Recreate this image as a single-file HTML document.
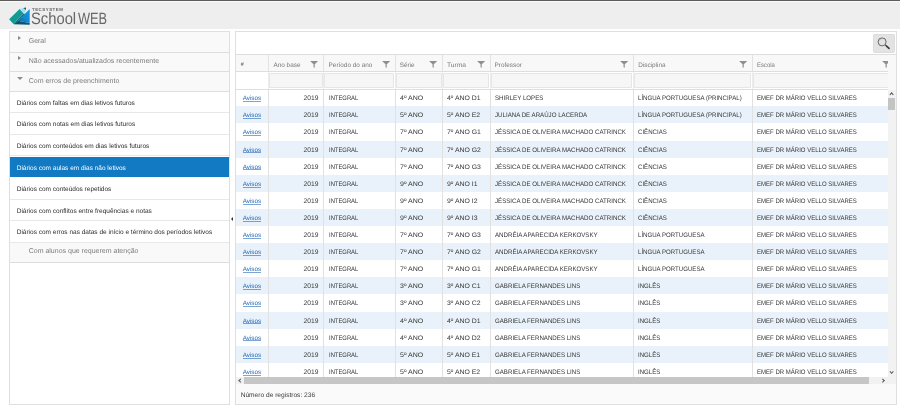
<!DOCTYPE html>
<html lang="pt-BR"><head><meta charset="utf-8"><title>SchoolWEB</title>
<style>
html,body{margin:0;padding:0;}
body{width:900px;height:407px;overflow:hidden;background:#fff;font-family:"Liberation Sans",sans-serif;position:relative;color:#444;text-rendering:geometricPrecision;}
.page{position:absolute;left:0;top:0;width:900px;height:407px;will-change:transform;}
.topline{position:absolute;left:0;top:0;width:900px;height:1px;background:#5c5c5c;}
.header{position:absolute;left:0;top:0;width:900px;height:28.7px;background:#eee;box-shadow:inset 0 2px 0 #fafafa;}
.logo{position:absolute;left:9px;top:7px;}
.brand{position:absolute;left:31.2px;top:10.5px;font-size:16.5px;line-height:17px;color:#666;white-space:nowrap;}
.brand span{display:inline-block;transform-origin:0 50%;}
.brand .s{transform:scaleX(0.895);}
.brand .w{position:absolute;left:46.8px;top:0;transform:scaleX(0.775);}
.tec{position:absolute;left:32px;top:8.2px;font-size:4.4px;line-height:4.4px;font-weight:bold;color:#666;letter-spacing:0.5px;white-space:nowrap;}
.left{position:absolute;left:8.8px;top:30.95px;width:221.3px;height:374.3px;border:1px solid #dfdfdf;background:#fff;box-sizing:border-box;}
.ah{position:relative;height:19.9px;box-sizing:border-box;background:#f9f9f9;border-bottom:1px solid #dedede;font-size:7px;line-height:20.3px;color:#7c7c7c;white-space:nowrap;}
.ah span{position:absolute;left:18.9px;top:0;}
.ah i{position:absolute;left:8.5px;top:4.5px;width:0;height:0;border-left:3.2px solid #8a8a8a;border-top:2.8px solid transparent;border-bottom:2.8px solid transparent;}
.ah i.open{left:7.2px;top:5.3px;border-left:3px solid transparent;border-right:3px solid transparent;border-top:3.1px solid #8c8c8c;border-bottom:none;}
.ah.h1{height:20.9px}
.ah.h2{height:18.9px}
.ah.h2 span{top:-1px}
.ah.h2 i{margin-top:-1px}
.ah.h4{height:19.9px}
.ah.h4 span{top:-1px}
.it{position:relative;height:21.6px;box-sizing:border-box;border-bottom:1px solid #e8e8e8;font-size:6.5px;line-height:24.6px;color:#2c2c2c;white-space:nowrap;background:#fff;}
.it span{position:absolute;left:6.9px;top:0;}
.it.sel{background:#1279c3;color:#fff;border-bottom-color:#fff;border-top:1px solid #fff;}
.it.sel span{top:0px}
.split{position:absolute;left:230.9px;top:216.5px;width:0;height:0;border-right:2.4px solid #333;border-top:2px solid transparent;border-bottom:2px solid transparent;}
.grid{position:absolute;left:234.5px;top:30.8px;width:662.6px;height:374.4px;border:1px solid #dfdfdf;background:#fff;box-sizing:border-box;}
.toolbar{position:absolute;left:0;top:0;width:100%;height:22.7px;background:#fff;}
.sbtn{position:absolute;left:637.7px;top:2.1px;width:22px;height:18.8px;background:#e3e3e3;border-radius:2.4px;box-shadow:0 0 0 0.5px #d6d6d6 inset;}
.sbtn svg{display:block}
.ghead{position:absolute;left:0;top:22.7px;width:100%;height:17.4px;background:#f8f8f8;border-top:1px solid #dedede;border-bottom:1px solid #dedede;box-sizing:border-box;}
.hc{position:absolute;top:0;height:15.4px;border-left:1px solid #e2e2e2;box-sizing:border-box;font-size:6.4px;line-height:21.8px;color:#7a7a7a;white-space:nowrap;}
.hc.c0{border-left:none}
.hc span{position:absolute;left:4.6px;top:0;display:inline-block;transform-origin:0 50%;}
.hc.c7 span{transform:scaleX(0.93)}
.hc.c3 span,.hc.c5 span{left:4px}
.hc.c4 span{left:4.3px}
.hc.c4 span{transform:scaleX(1.04)}
.hc.c0 span{left:5.3px;top:-0.6px;font-size:5.4px;font-weight:bold;color:#6a6a6a;}
.hc .fi{position:absolute;right:4.4px;top:5.7px;}
.hc.c7 .fi{right:-2.6px}
.gfilt{position:absolute;left:0;top:40.1px;width:652.5px;height:17.9px;background:#fff;overflow:visible;border-bottom:1px solid #dedede;box-sizing:border-box;}
.gfilt:after{content:"";position:absolute;left:652.5px;top:-16.4px;width:8.1px;height:34.3px;background:#f8f8f8;}
.fl{position:absolute;top:0;width:1px;height:17px;background:#ededed;}
.fc{position:absolute;top:1.3px;height:15.2px;background:#f6f6f6;border:1px solid #e6e6e6;box-sizing:border-box;border-radius:0.8px;}
.gbody{position:absolute;left:0;top:58px;width:652.5px;height:287.2px;overflow:hidden;}
.row{position:relative;height:17.1px;background:#fff;}
.row:first-child{margin-top:-0.5px}
.row.alt{background:#e9f2fa;}
.c{position:absolute;top:0;height:17.1px;border-left:1px solid #e1e1e1;box-sizing:border-box;font-size:6.5px;line-height:19.8px;color:#383838;white-space:nowrap;padding-left:4.6px;overflow:hidden;}
.c.c3,.c.c5{padding-left:4.1px}
.c span{display:inline-block;transform-origin:0 50%;}
.c.c0{border-left:none;padding-left:7.2px;line-height:20.6px;}
.c.c0 a{color:#2468b8;text-decoration:none;font-size:6.3px;display:inline-block;line-height:2.8px;border-bottom:1px solid rgba(36,104,184,0.6);}
.c.c1{text-align:right;padding-right:4.6px;padding-left:0;font-size:6.7px;}
.c.c2 span{transform:scaleX(0.90)}
.c.c3 span{transform:scaleX(1.08)}
.c.c4 span{transform:scaleX(1.06)}
.c.c5 span{transform:scaleX(0.945)}
.c.c6 span{transform:scaleX(0.937)}
.c.c7 span{transform:scaleX(0.926)}
.vscroll{position:absolute;left:652.5px;top:58px;width:8.1px;height:287.2px;background:#f2f2f2;}
.vthumb{position:absolute;left:0px;top:8px;width:7px;height:12px;background:#c4c4c4;}
.varr{position:absolute;left:2.4px;width:2.2px;height:2.2px;border-left:0.9px solid #555;border-top:0.9px solid #555;}
.varr.up{top:3.6px;transform:rotate(45deg);}
.varr.dn{bottom:3.6px;transform:rotate(225deg);}
.hscroll{position:absolute;left:0;top:345.2px;width:660.6px;height:7.3px;background:#f1f1f1;}
.hscroll:after{content:"";position:absolute;right:0;top:0;width:8.1px;height:7.3px;background:#f2f2f2;}
.hthumb{position:absolute;left:8.3px;top:0;width:625.5px;height:7.3px;background:#c6c6c6;}
.harr{position:absolute;top:2.4px;width:2.2px;height:2.2px;border-left:0.9px solid #555;border-top:0.9px solid #555;}
.harr.l{left:3.6px;transform:rotate(-45deg);}
.harr.r{left:645.2px;transform:rotate(135deg);}
.gfoot{position:absolute;left:0;top:352.5px;width:100%;height:19.9px;background:#fafafa;font-size:6.6px;line-height:24.6px;color:#3c3c3c;white-space:nowrap;}
.gfoot span{position:absolute;left:5.2px;top:0;}

</style></head><body><div class="page">
<div class="header"></div><div class="topline"></div>
<svg class="logo" width="22" height="19" viewBox="0 0 22 19">
<defs><linearGradient id="bg" x1="1" y1="0" x2="0.2" y2="1"><stop offset="0" stop-color="#1696de"/><stop offset="0.6" stop-color="#108ad2"/><stop offset="1" stop-color="#0b67a8"/></linearGradient></defs>
<polygon points="5,17.2 8.9,13.8 20.7,15.9 20.7,17.7" fill="#0a5470"/>
<polygon points="20.7,2.1 20.7,15.9 8.9,13.8" fill="url(#bg)"/>
<polygon points="14.5,6.4 16,7 8.9,13.8 5.2,17.3 4.4,17" fill="#0a6a70"/>
<polygon points="0.1,12.3 10.6,2 14.6,6.3 4.4,17" fill="#0f9b94"/>
<polygon points="10.6,2.1 14.3,1.1 17,3 15.4,6.9 14.6,6.3" fill="#a3ddf8"/>
<polygon points="14.3,1.1 16.9,0.6 17,3" fill="#0b5d63"/>
</svg>
<div class="tec">TECSYSTEM</div>
<div class="brand"><span class="s">School</span><span class="w">WEB</span></div>
<div class="left">
<div class="ah h1"><i></i><span>Geral</span></div>
<div class="ah h2"><i></i><span>Não acessados/atualizados recentemente</span></div>
<div class="ah"><i class="open"></i><span>Com erros de preenchimento</span></div>
<div class="it"><span>Diários com faltas em dias letivos futuros</span></div>
<div class="it"><span>Diários com notas em dias letivos futuros</span></div>
<div class="it"><span>Diários com conteúdos em dias letivos futuros</span></div>
<div class="it sel"><span>Diários com aulas em dias não letivos</span></div>
<div class="it"><span>Diários com conteúdos repetidos</span></div>
<div class="it"><span>Diários com conflitos entre frequências e notas</span></div>
<div class="it"><span>Diários com erros nas datas de início e término dos períodos letivos</span></div>
<div class="ah h4"><span>Com alunos que requerem atenção</span></div>
</div>
<div class="split"></div>

<div class="grid">
<div class="toolbar"><div class="sbtn"><svg width="22" height="18.8" viewBox="0 0 22 18.8"><circle cx="9.1" cy="7.9" r="4" fill="none" stroke="#4a4a4a" stroke-width="0.8"/><path d="M6.6 6.6A2.8 2.8 0 0 1 8.6 5.2" fill="none" stroke="#999" stroke-width="0.5"/><line x1="12" y1="10.7" x2="13.4" y2="12" stroke="#444" stroke-width="0.9"/><line x1="13.3" y1="11.9" x2="16" y2="14.4" stroke="#3c3c3c" stroke-width="1.7" stroke-linecap="round"/></svg></div></div>

<div class="ghead">
<div class="hc c0" style="left:0.00px;width:32.35px"><span>#</span></div>
<div class="hc c1" style="left:32.35px;width:55.15px"><span>Ano base</span><svg class="fi" width="8.2" height="7" viewBox="0 0 8.2 7"><path d="M0.1 0.1H8.1L4.75 3.3V6.8L3.55 6.3V3.3Z" fill="#8e8e8e"/></svg></div>
<div class="hc c2" style="left:87.50px;width:71.70px"><span>Período do ano</span><svg class="fi" width="8.2" height="7" viewBox="0 0 8.2 7"><path d="M0.1 0.1H8.1L4.75 3.3V6.8L3.55 6.3V3.3Z" fill="#8e8e8e"/></svg></div>
<div class="hc c3" style="left:159.20px;width:47.10px"><span>Série</span><svg class="fi" width="8.2" height="7" viewBox="0 0 8.2 7"><path d="M0.1 0.1H8.1L4.75 3.3V6.8L3.55 6.3V3.3Z" fill="#8e8e8e"/></svg></div>
<div class="hc c4" style="left:206.30px;width:47.80px"><span>Turma</span><svg class="fi" width="8.2" height="7" viewBox="0 0 8.2 7"><path d="M0.1 0.1H8.1L4.75 3.3V6.8L3.55 6.3V3.3Z" fill="#8e8e8e"/></svg></div>
<div class="hc c5" style="left:254.10px;width:143.00px"><span>Professor</span><svg class="fi" width="8.2" height="7" viewBox="0 0 8.2 7"><path d="M0.1 0.1H8.1L4.75 3.3V6.8L3.55 6.3V3.3Z" fill="#8e8e8e"/></svg></div>
<div class="hc c6" style="left:397.10px;width:119.00px"><span>Disciplina</span><svg class="fi" width="8.2" height="7" viewBox="0 0 8.2 7"><path d="M0.1 0.1H8.1L4.75 3.3V6.8L3.55 6.3V3.3Z" fill="#8e8e8e"/></svg></div>
<div class="hc c7" style="left:516.10px;width:136.40px"><span>Escola</span><svg class="fi" width="8.2" height="7" viewBox="0 0 8.2 7"><path d="M0.1 0.1H8.1L4.75 3.3V6.8L3.55 6.3V3.3Z" fill="#8e8e8e"/></svg></div>
</div>
<div class="gfilt">
<div class="fl" style="left:32.35px"></div>
<div class="fc" style="left:33.75px;width:53.55px"></div>
<div class="fl" style="left:87.50px"></div>
<div class="fc" style="left:88.90px;width:70.10px"></div>
<div class="fl" style="left:159.20px"></div>
<div class="fc" style="left:160.60px;width:45.50px"></div>
<div class="fl" style="left:206.30px"></div>
<div class="fc" style="left:207.70px;width:46.20px"></div>
<div class="fl" style="left:254.10px"></div>
<div class="fc" style="left:255.50px;width:141.40px"></div>
<div class="fl" style="left:397.10px"></div>
<div class="fc" style="left:398.50px;width:117.40px"></div>
<div class="fl" style="left:516.10px"></div>
<div class="fc" style="left:517.50px;width:139.40px"></div>
</div>
<div class="gbody">
<div class="row">
<div class="c c0" style="left:0.00px;width:32.35px"><a>Avisos</a></div>
<div class="c c1" style="left:32.35px;width:55.15px"><span>2019</span></div>
<div class="c c2" style="left:87.50px;width:71.70px"><span>INTEGRAL</span></div>
<div class="c c3" style="left:159.20px;width:47.10px"><span>4º ANO</span></div>
<div class="c c4" style="left:206.30px;width:47.80px"><span>4º ANO D1</span></div>
<div class="c c5" style="left:254.10px;width:143.00px"><span>SHIRLEY LOPES</span></div>
<div class="c c6" style="left:397.10px;width:119.00px"><span>LÍNGUA PORTUGUESA (PRINCIPAL)</span></div>
<div class="c c7" style="left:516.10px;width:136.40px"><span>EMEF DR MÁRIO VELLO SILVARES</span></div>
</div>
<div class="row alt">
<div class="c c0" style="left:0.00px;width:32.35px"><a>Avisos</a></div>
<div class="c c1" style="left:32.35px;width:55.15px"><span>2019</span></div>
<div class="c c2" style="left:87.50px;width:71.70px"><span>INTEGRAL</span></div>
<div class="c c3" style="left:159.20px;width:47.10px"><span>5º ANO</span></div>
<div class="c c4" style="left:206.30px;width:47.80px"><span>5º ANO E2</span></div>
<div class="c c5" style="left:254.10px;width:143.00px"><span>JULIANA DE ARAÚJO LACERDA</span></div>
<div class="c c6" style="left:397.10px;width:119.00px"><span>LÍNGUA PORTUGUESA (PRINCIPAL)</span></div>
<div class="c c7" style="left:516.10px;width:136.40px"><span>EMEF DR MÁRIO VELLO SILVARES</span></div>
</div>
<div class="row">
<div class="c c0" style="left:0.00px;width:32.35px"><a>Avisos</a></div>
<div class="c c1" style="left:32.35px;width:55.15px"><span>2019</span></div>
<div class="c c2" style="left:87.50px;width:71.70px"><span>INTEGRAL</span></div>
<div class="c c3" style="left:159.20px;width:47.10px"><span>7º ANO</span></div>
<div class="c c4" style="left:206.30px;width:47.80px"><span>7º ANO G1</span></div>
<div class="c c5" style="left:254.10px;width:143.00px"><span>JÉSSICA DE OLIVEIRA MACHADO CATRINCK</span></div>
<div class="c c6" style="left:397.10px;width:119.00px"><span>CIÊNCIAS</span></div>
<div class="c c7" style="left:516.10px;width:136.40px"><span>EMEF DR MÁRIO VELLO SILVARES</span></div>
</div>
<div class="row alt">
<div class="c c0" style="left:0.00px;width:32.35px"><a>Avisos</a></div>
<div class="c c1" style="left:32.35px;width:55.15px"><span>2019</span></div>
<div class="c c2" style="left:87.50px;width:71.70px"><span>INTEGRAL</span></div>
<div class="c c3" style="left:159.20px;width:47.10px"><span>7º ANO</span></div>
<div class="c c4" style="left:206.30px;width:47.80px"><span>7º ANO G2</span></div>
<div class="c c5" style="left:254.10px;width:143.00px"><span>JÉSSICA DE OLIVEIRA MACHADO CATRINCK</span></div>
<div class="c c6" style="left:397.10px;width:119.00px"><span>CIÊNCIAS</span></div>
<div class="c c7" style="left:516.10px;width:136.40px"><span>EMEF DR MÁRIO VELLO SILVARES</span></div>
</div>
<div class="row">
<div class="c c0" style="left:0.00px;width:32.35px"><a>Avisos</a></div>
<div class="c c1" style="left:32.35px;width:55.15px"><span>2019</span></div>
<div class="c c2" style="left:87.50px;width:71.70px"><span>INTEGRAL</span></div>
<div class="c c3" style="left:159.20px;width:47.10px"><span>7º ANO</span></div>
<div class="c c4" style="left:206.30px;width:47.80px"><span>7º ANO G3</span></div>
<div class="c c5" style="left:254.10px;width:143.00px"><span>JÉSSICA DE OLIVEIRA MACHADO CATRINCK</span></div>
<div class="c c6" style="left:397.10px;width:119.00px"><span>CIÊNCIAS</span></div>
<div class="c c7" style="left:516.10px;width:136.40px"><span>EMEF DR MÁRIO VELLO SILVARES</span></div>
</div>
<div class="row alt">
<div class="c c0" style="left:0.00px;width:32.35px"><a>Avisos</a></div>
<div class="c c1" style="left:32.35px;width:55.15px"><span>2019</span></div>
<div class="c c2" style="left:87.50px;width:71.70px"><span>INTEGRAL</span></div>
<div class="c c3" style="left:159.20px;width:47.10px"><span>9º ANO</span></div>
<div class="c c4" style="left:206.30px;width:47.80px"><span>9º ANO I1</span></div>
<div class="c c5" style="left:254.10px;width:143.00px"><span>JÉSSICA DE OLIVEIRA MACHADO CATRINCK</span></div>
<div class="c c6" style="left:397.10px;width:119.00px"><span>CIÊNCIAS</span></div>
<div class="c c7" style="left:516.10px;width:136.40px"><span>EMEF DR MÁRIO VELLO SILVARES</span></div>
</div>
<div class="row">
<div class="c c0" style="left:0.00px;width:32.35px"><a>Avisos</a></div>
<div class="c c1" style="left:32.35px;width:55.15px"><span>2019</span></div>
<div class="c c2" style="left:87.50px;width:71.70px"><span>INTEGRAL</span></div>
<div class="c c3" style="left:159.20px;width:47.10px"><span>9º ANO</span></div>
<div class="c c4" style="left:206.30px;width:47.80px"><span>9º ANO I2</span></div>
<div class="c c5" style="left:254.10px;width:143.00px"><span>JÉSSICA DE OLIVEIRA MACHADO CATRINCK</span></div>
<div class="c c6" style="left:397.10px;width:119.00px"><span>CIÊNCIAS</span></div>
<div class="c c7" style="left:516.10px;width:136.40px"><span>EMEF DR MÁRIO VELLO SILVARES</span></div>
</div>
<div class="row alt">
<div class="c c0" style="left:0.00px;width:32.35px"><a>Avisos</a></div>
<div class="c c1" style="left:32.35px;width:55.15px"><span>2019</span></div>
<div class="c c2" style="left:87.50px;width:71.70px"><span>INTEGRAL</span></div>
<div class="c c3" style="left:159.20px;width:47.10px"><span>9º ANO</span></div>
<div class="c c4" style="left:206.30px;width:47.80px"><span>9º ANO I3</span></div>
<div class="c c5" style="left:254.10px;width:143.00px"><span>JÉSSICA DE OLIVEIRA MACHADO CATRINCK</span></div>
<div class="c c6" style="left:397.10px;width:119.00px"><span>CIÊNCIAS</span></div>
<div class="c c7" style="left:516.10px;width:136.40px"><span>EMEF DR MÁRIO VELLO SILVARES</span></div>
</div>
<div class="row">
<div class="c c0" style="left:0.00px;width:32.35px"><a>Avisos</a></div>
<div class="c c1" style="left:32.35px;width:55.15px"><span>2019</span></div>
<div class="c c2" style="left:87.50px;width:71.70px"><span>INTEGRAL</span></div>
<div class="c c3" style="left:159.20px;width:47.10px"><span>7º ANO</span></div>
<div class="c c4" style="left:206.30px;width:47.80px"><span>7º ANO G3</span></div>
<div class="c c5" style="left:254.10px;width:143.00px"><span>ANDRÉIA APARECIDA KERKOVSKY</span></div>
<div class="c c6" style="left:397.10px;width:119.00px"><span>LÍNGUA PORTUGUESA</span></div>
<div class="c c7" style="left:516.10px;width:136.40px"><span>EMEF DR MÁRIO VELLO SILVARES</span></div>
</div>
<div class="row alt">
<div class="c c0" style="left:0.00px;width:32.35px"><a>Avisos</a></div>
<div class="c c1" style="left:32.35px;width:55.15px"><span>2019</span></div>
<div class="c c2" style="left:87.50px;width:71.70px"><span>INTEGRAL</span></div>
<div class="c c3" style="left:159.20px;width:47.10px"><span>7º ANO</span></div>
<div class="c c4" style="left:206.30px;width:47.80px"><span>7º ANO G2</span></div>
<div class="c c5" style="left:254.10px;width:143.00px"><span>ANDRÉIA APARECIDA KERKOVSKY</span></div>
<div class="c c6" style="left:397.10px;width:119.00px"><span>LÍNGUA PORTUGUESA</span></div>
<div class="c c7" style="left:516.10px;width:136.40px"><span>EMEF DR MÁRIO VELLO SILVARES</span></div>
</div>
<div class="row">
<div class="c c0" style="left:0.00px;width:32.35px"><a>Avisos</a></div>
<div class="c c1" style="left:32.35px;width:55.15px"><span>2019</span></div>
<div class="c c2" style="left:87.50px;width:71.70px"><span>INTEGRAL</span></div>
<div class="c c3" style="left:159.20px;width:47.10px"><span>7º ANO</span></div>
<div class="c c4" style="left:206.30px;width:47.80px"><span>7º ANO G1</span></div>
<div class="c c5" style="left:254.10px;width:143.00px"><span>ANDRÉIA APARECIDA KERKOVSKY</span></div>
<div class="c c6" style="left:397.10px;width:119.00px"><span>LÍNGUA PORTUGUESA</span></div>
<div class="c c7" style="left:516.10px;width:136.40px"><span>EMEF DR MÁRIO VELLO SILVARES</span></div>
</div>
<div class="row alt">
<div class="c c0" style="left:0.00px;width:32.35px"><a>Avisos</a></div>
<div class="c c1" style="left:32.35px;width:55.15px"><span>2019</span></div>
<div class="c c2" style="left:87.50px;width:71.70px"><span>INTEGRAL</span></div>
<div class="c c3" style="left:159.20px;width:47.10px"><span>3º ANO</span></div>
<div class="c c4" style="left:206.30px;width:47.80px"><span>3º ANO C1</span></div>
<div class="c c5" style="left:254.10px;width:143.00px"><span>GABRIELA FERNANDES LINS</span></div>
<div class="c c6" style="left:397.10px;width:119.00px"><span>INGLÊS</span></div>
<div class="c c7" style="left:516.10px;width:136.40px"><span>EMEF DR MÁRIO VELLO SILVARES</span></div>
</div>
<div class="row">
<div class="c c0" style="left:0.00px;width:32.35px"><a>Avisos</a></div>
<div class="c c1" style="left:32.35px;width:55.15px"><span>2019</span></div>
<div class="c c2" style="left:87.50px;width:71.70px"><span>INTEGRAL</span></div>
<div class="c c3" style="left:159.20px;width:47.10px"><span>3º ANO</span></div>
<div class="c c4" style="left:206.30px;width:47.80px"><span>3º ANO C2</span></div>
<div class="c c5" style="left:254.10px;width:143.00px"><span>GABRIELA FERNANDES LINS</span></div>
<div class="c c6" style="left:397.10px;width:119.00px"><span>INGLÊS</span></div>
<div class="c c7" style="left:516.10px;width:136.40px"><span>EMEF DR MÁRIO VELLO SILVARES</span></div>
</div>
<div class="row alt">
<div class="c c0" style="left:0.00px;width:32.35px"><a>Avisos</a></div>
<div class="c c1" style="left:32.35px;width:55.15px"><span>2019</span></div>
<div class="c c2" style="left:87.50px;width:71.70px"><span>INTEGRAL</span></div>
<div class="c c3" style="left:159.20px;width:47.10px"><span>4º ANO</span></div>
<div class="c c4" style="left:206.30px;width:47.80px"><span>4º ANO D1</span></div>
<div class="c c5" style="left:254.10px;width:143.00px"><span>GABRIELA FERNANDES LINS</span></div>
<div class="c c6" style="left:397.10px;width:119.00px"><span>INGLÊS</span></div>
<div class="c c7" style="left:516.10px;width:136.40px"><span>EMEF DR MÁRIO VELLO SILVARES</span></div>
</div>
<div class="row">
<div class="c c0" style="left:0.00px;width:32.35px"><a>Avisos</a></div>
<div class="c c1" style="left:32.35px;width:55.15px"><span>2019</span></div>
<div class="c c2" style="left:87.50px;width:71.70px"><span>INTEGRAL</span></div>
<div class="c c3" style="left:159.20px;width:47.10px"><span>4º ANO</span></div>
<div class="c c4" style="left:206.30px;width:47.80px"><span>4º ANO D2</span></div>
<div class="c c5" style="left:254.10px;width:143.00px"><span>GABRIELA FERNANDES LINS</span></div>
<div class="c c6" style="left:397.10px;width:119.00px"><span>INGLÊS</span></div>
<div class="c c7" style="left:516.10px;width:136.40px"><span>EMEF DR MÁRIO VELLO SILVARES</span></div>
</div>
<div class="row alt">
<div class="c c0" style="left:0.00px;width:32.35px"><a>Avisos</a></div>
<div class="c c1" style="left:32.35px;width:55.15px"><span>2019</span></div>
<div class="c c2" style="left:87.50px;width:71.70px"><span>INTEGRAL</span></div>
<div class="c c3" style="left:159.20px;width:47.10px"><span>5º ANO</span></div>
<div class="c c4" style="left:206.30px;width:47.80px"><span>5º ANO E1</span></div>
<div class="c c5" style="left:254.10px;width:143.00px"><span>GABRIELA FERNANDES LINS</span></div>
<div class="c c6" style="left:397.10px;width:119.00px"><span>INGLÊS</span></div>
<div class="c c7" style="left:516.10px;width:136.40px"><span>EMEF DR MÁRIO VELLO SILVARES</span></div>
</div>
<div class="row">
<div class="c c0" style="left:0.00px;width:32.35px"><a>Avisos</a></div>
<div class="c c1" style="left:32.35px;width:55.15px"><span>2019</span></div>
<div class="c c2" style="left:87.50px;width:71.70px"><span>INTEGRAL</span></div>
<div class="c c3" style="left:159.20px;width:47.10px"><span>5º ANO</span></div>
<div class="c c4" style="left:206.30px;width:47.80px"><span>5º ANO E2</span></div>
<div class="c c5" style="left:254.10px;width:143.00px"><span>GABRIELA FERNANDES LINS</span></div>
<div class="c c6" style="left:397.10px;width:119.00px"><span>INGLÊS</span></div>
<div class="c c7" style="left:516.10px;width:136.40px"><span>EMEF DR MÁRIO VELLO SILVARES</span></div>
</div>
</div>
<div class="vscroll"><div class="varr up"></div><div class="vthumb"></div><div class="varr dn"></div></div>
<div class="hscroll"><div class="harr l"></div><div class="hthumb"></div><div class="harr r"></div></div>
<div class="gfoot"><span>Número de registros: 236</span></div>
</div>
</div></body></html>
